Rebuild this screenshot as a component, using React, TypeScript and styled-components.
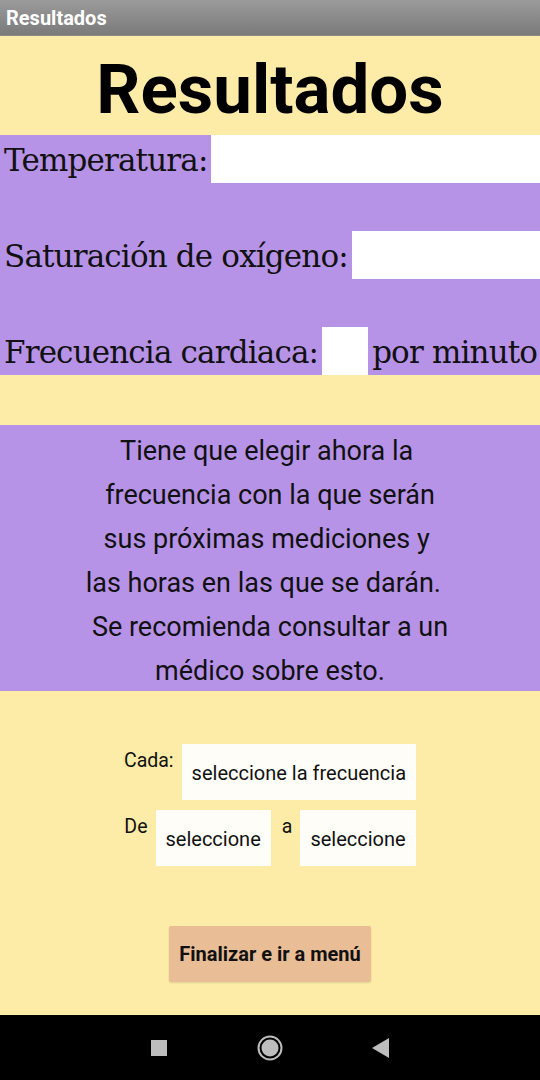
import React from "react";
import styled, { createGlobalStyle } from "styled-components";

const Global = createGlobalStyle`
  html, body { margin: 0; padding: 0; }
  body { font-family: Roboto, "Noto Sans", sans-serif; }
  * { box-sizing: border-box; }
`;

const Screen = styled.div`
  width: 540px;
  height: 1080px;
  display: flex;
  flex-direction: column;
  background: #fdeca7;
  overflow: hidden;
`;

const TitleBar = styled.div`
  height: 36px;
  flex: none;
  display: flex;
  align-items: center;
  padding-left: 6px;
  background: linear-gradient(#9b9b9b, #7a7a7a);
  color: #fff;
  font: 700 20px Roboto, sans-serif;
  border-bottom: 1px solid #8a8a8a;
`;

const Content = styled.div`
  flex: 1;
  display: flex;
  flex-direction: column;
`;

const Heading = styled.h1`
  margin: 0;
  height: 99px;
  display: flex;
  align-items: center;
  justify-content: center;
  font: 700 69px Roboto, sans-serif;
  color: #000;
  padding-top: 8px;
`;

const Panel = styled.div<{ $mt?: number }>`
  background: #b793e8;
  margin-top: ${(p) => p.$mt ?? 0}px;
`;

const Readings = styled(Panel)`
  display: flex;
  flex-direction: column;
  gap: 48px;
`;

const Row = styled.div`
  height: 48px;
  display: flex;
  align-items: stretch;
`;

const Label = styled.span`
  display: flex;
  align-items: center;
  padding: 2px 4px 0;
  font: 400 31px "DejaVu Serif", serif;
  letter-spacing: -0.85px;
  color: #111;
  white-space: nowrap;
`;

const Field = styled.div<{ $w?: number }>`
  background: #fff;
  ${(p) => (p.$w ? `width: ${p.$w}px; flex: none;` : "flex: 1;")}
`;

const Info = styled(Panel)`
  padding: 4px 0 0;
  height: 266px;
  text-align: center;
  font: 400 27px Roboto, sans-serif;
  line-height: 44px;
  color: #111;
`;

const Line = styled.span`
  display: block;
  white-space: pre;
`;

const Form = styled.div`
  margin-top: 53px;
  display: flex;
  flex-direction: column;
  align-items: center;
  gap: 10px;
`;

const FormRow = styled.div`
  display: flex;
  align-items: flex-start;
`;

const SmallLabel = styled.span`
  font: 400 19.5px Roboto, sans-serif;
  color: #111;
  line-height: 22px;
  margin-top: 6px;
  margin-right: 8px;
`;

const Select = styled.div`
  height: 56px;
  display: flex;
  align-items: center;
  padding: 2px 10px 0;
  background: #fffdf8;
  font: 400 20px Roboto, sans-serif;
  color: #111;
  margin-right: 11px;
  &:last-child { margin-right: 0; }
`;

const Button = styled.button`
  align-self: center;
  margin-top: 60px;
  width: 202px;
  height: 56px;
  border: none;
  border-radius: 2px;
  background: #e9bd95;
  box-shadow: 0 1px 2px rgba(0,0,0,0.12);
  font: 700 20px Roboto, sans-serif;
  color: #111;
  padding: 0;
`;

const NavBar = styled.div`
  height: 65px;
  flex: none;
  background: #000;
  display: flex;
  align-items: center;
  justify-content: center;
`;

const NavSlot = styled.div`
  width: 111px;
  display: flex;
  justify-content: center;
  align-items: center;
`;

const infoLines = [
  "Tiene que elegir ahora la ",
  "frecuencia con la que serán",
  "sus próximas mediciones y ",
  "las horas en las que se darán.  ",
  "Se recomienda consultar a un",
  "médico sobre esto.",
];

export default function App() {
  return (
    <Screen>
      <Global />
      <TitleBar>Resultados</TitleBar>
      <Content>
        <Heading>Resultados</Heading>
        <Readings>
          <Row>
            <Label>Temperatura:</Label>
            <Field />
          </Row>
          <Row>
            <Label>Saturación de oxígeno:</Label>
            <Field />
          </Row>
          <Row>
            <Label>Frecuencia cardiaca:</Label>
            <Field $w={46} />
            <Label>por minuto</Label>
          </Row>
        </Readings>
        <Info $mt={50}>
          {infoLines.map((l) => (
            <Line key={l}>{l}</Line>
          ))}
        </Info>
        <Form>
          <FormRow>
            <SmallLabel>Cada:</SmallLabel>
            <Select>seleccione la frecuencia</Select>
          </FormRow>
          <FormRow>
            <SmallLabel>De</SmallLabel>
            <Select>seleccione</Select>
            <SmallLabel>a</SmallLabel>
            <Select>seleccione</Select>
          </FormRow>
        </Form>
        <Button>Finalizar e ir a menú</Button>
      </Content>
      <NavBar>
        <NavSlot>
          <svg width="16" height="16" viewBox="0 0 16 16">
            <rect x="0" y="0" width="16" height="16" fill="#bdbdbd" />
          </svg>
        </NavSlot>
        <NavSlot>
          <svg width="26" height="26" viewBox="0 0 26 26">
            <circle cx="13" cy="13" r="11.5" fill="none" stroke="#bdbdbd" strokeWidth="2" />
            <circle cx="13" cy="13" r="8.5" fill="#bdbdbd" />
          </svg>
        </NavSlot>
        <NavSlot>
          <svg width="18" height="20" viewBox="0 0 18 20">
            <polygon points="17,0 17,20 0,10" fill="#bdbdbd" />
          </svg>
        </NavSlot>
      </NavBar>
    </Screen>
  );
}
